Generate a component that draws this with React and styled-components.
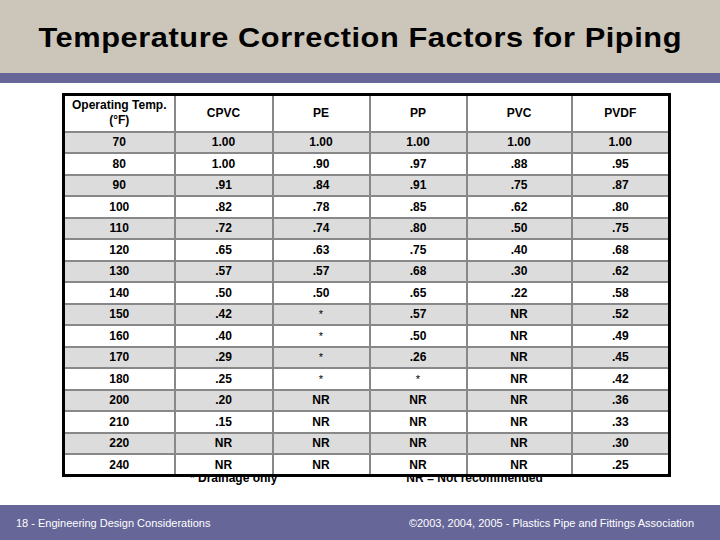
import React from "react";
import styled, { createGlobalStyle } from "styled-components";

const Global = createGlobalStyle`
  html, body { margin: 0; padding: 0; background: #fff; }
  body { font-family: "Liberation Sans", Arial, sans-serif; }
`;

const Page = styled.div`
  width: 720px;
  height: 540px;
  display: flex;
  flex-direction: column;
  overflow: hidden;
  background: #fff;
`;

const Header = styled.header`
  height: 73px;
  background: #ccc5b9;
  display: flex;
  align-items: center;
  justify-content: center;
`;

const Title = styled.h1`
  margin: 0;
  padding-top: 3px;
  font-family: "Liberation Sans", Arial, sans-serif;
  font-weight: bold;
  font-size: 27px;
  letter-spacing: 0.5px;
  white-space: nowrap;
  transform: scaleX(1.14);
  color: #000;
`;

const Stripe = styled.div`
  height: 10px;
  background: #666699;
`;

const Body = styled.main`
  padding-top: 10px;
  display: flex;
  flex-direction: column;
`;

const Table = styled.table`
  position: relative;
  z-index: 1;
  margin-left: 62px;
  width: 609px;
  table-layout: fixed;
  border-collapse: collapse;
  border: 3px solid #000;
  background: #fff;
`;

const Col = styled.col`
  width: ${(p) => p.$w}px;
`;

const Row = styled.tr`
  height: ${(p) => (p.$head ? 37 : 21.5)}px;
  background: ${(p) => (p.$shade ? "#dcdcdc" : "#fff")};
`;

const Cell = styled.td`
  border: 2px solid #888888;
  padding: 0;
  text-align: center;
  vertical-align: middle;
  color: #000;
  font-family: "Liberation Sans", Arial, sans-serif;
  font-weight: ${(p) => (p.$star ? "normal" : "bold")};
  font-size: ${(p) => (p.$star ? 11 : 12)}px;
  line-height: 14px;
`;

const HeadCell = styled.th`
  border: 2px solid #888888;
  padding: 0;
  text-align: center;
  vertical-align: middle;
  color: #000;
  font-family: "Liberation Sans", Arial, sans-serif;
  font-weight: bold;
  font-size: 12px;
  line-height: 15px;
`;

const Notes = styled.div`
  display: flex;
  gap: 129px;
  margin-top: -6px;
  padding-left: 190px;
  font-family: "Liberation Sans", Arial, sans-serif;
  font-weight: bold;
  font-size: 12px;
  line-height: 14px;
  color: #000;
`;

const Footer = styled.footer`
  margin-top: auto;
  height: 35px;
  background: #666699;
  display: flex;
  align-items: center;
  justify-content: space-between;
  padding: 0 26px 0 16px;
  color: #fff;
  font-family: "Liberation Sans", Arial, sans-serif;
  font-size: 11px;
`;

const headers = ["CPVC", "PE", "PP", "PVC", "PVDF"];
const widths = [111, 98, 97, 97, 105, 98];

const rows = [
  ["70", "1.00", "1.00", "1.00", "1.00", "1.00"],
  ["80", "1.00", ".90", ".97", ".88", ".95"],
  ["90", ".91", ".84", ".91", ".75", ".87"],
  ["100", ".82", ".78", ".85", ".62", ".80"],
  ["110", ".72", ".74", ".80", ".50", ".75"],
  ["120", ".65", ".63", ".75", ".40", ".68"],
  ["130", ".57", ".57", ".68", ".30", ".62"],
  ["140", ".50", ".50", ".65", ".22", ".58"],
  ["150", ".42", "*", ".57", "NR", ".52"],
  ["160", ".40", "*", ".50", "NR", ".49"],
  ["170", ".29", "*", ".26", "NR", ".45"],
  ["180", ".25", "*", "*", "NR", ".42"],
  ["200", ".20", "NR", "NR", "NR", ".36"],
  ["210", ".15", "NR", "NR", "NR", ".33"],
  ["220", "NR", "NR", "NR", "NR", ".30"],
  ["240", "NR", "NR", "NR", "NR", ".25"],
];

export default function App() {
  return (
    <Page>
      <Global />
      <Header>
        <Title>Temperature Correction Factors for Piping</Title>
      </Header>
      <Stripe />
      <Body>
        <Table>
          <colgroup>
            {widths.map((w, i) => (
              <Col key={i} $w={w} />
            ))}
          </colgroup>
          <thead>
            <Row $head>
              <HeadCell>
                Operating Temp.
                <br />
                (°F)
              </HeadCell>
              {headers.map((h) => (
                <HeadCell key={h}>{h}</HeadCell>
              ))}
            </Row>
          </thead>
          <tbody>
            {rows.map((r, i) => (
              <Row key={r[0]} $shade={i % 2 === 0}>
                {r.map((v, j) => (
                  <Cell key={j} $star={v === "*"}>
                    {v}
                  </Cell>
                ))}
              </Row>
            ))}
          </tbody>
        </Table>
        <Notes>
          <span>* Drainage only</span>
          <span>NR = Not recommended</span>
        </Notes>
      </Body>
      <Footer>
        <span>18 - Engineering Design Considerations</span>
        <span>©2003, 2004, 2005 - Plastics Pipe and Fittings Association</span>
      </Footer>
    </Page>
  );
}
